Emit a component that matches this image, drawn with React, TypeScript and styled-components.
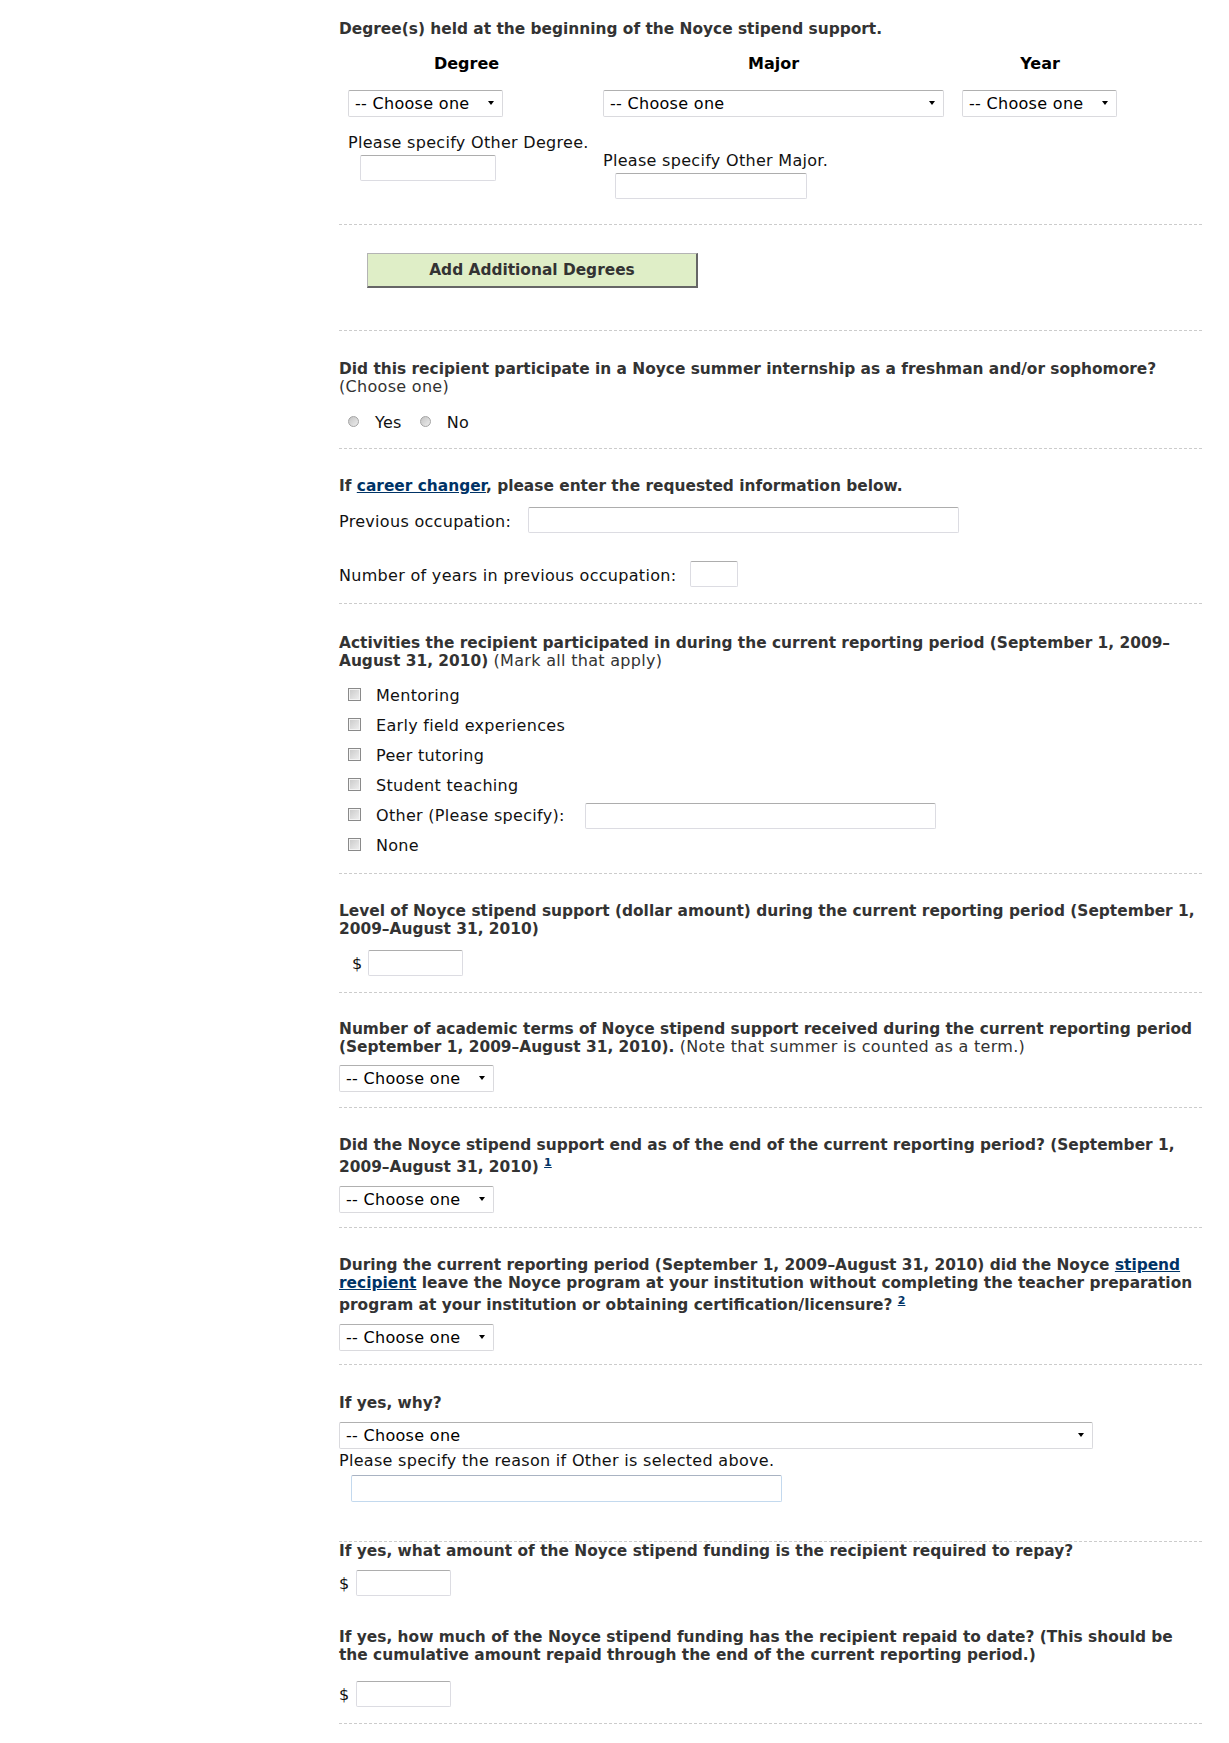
import React from 'react';
import styled, { createGlobalStyle } from 'styled-components';

const FONT = `"DejaVu Sans", Verdana, sans-serif`;

const GlobalStyle = createGlobalStyle`
  body {
    margin: 0;
    background: #fff;
    font-family: ${FONT};
    color: #000;
  }
`;

const ChooseSelect: React.FC<{ width: number }> = ({ width }) => (
  <SelectWrap $w={width}>
    <Select defaultValue="">
      <option value="">-- Choose one</option>
    </Select>
  </SelectWrap>
);

const App: React.FC = () => {
  return (
    <>
      <GlobalStyle />
      <Page>
        <Section $pt={20} $pb={25}>
          <Heading>Degree(s) held at the beginning of the Noyce stipend support.</Heading>
          <DegreeGrid>
            <ColHead>Degree</ColHead>
            <ColHead>Major</ColHead>
            <ColHead>Year</ColHead>
            <ColBody>
              <ChooseSelect width={155} />
              <Label $mt={17}>Please specify Other Degree.</Label>
              <TextInput $w={136} $mt={3} $ml={12} />
            </ColBody>
            <ColBody>
              <ChooseSelect width={341} />
              <Label $mt={35}>Please specify Other Major.</Label>
              <TextInput $w={192} $mt={3} $ml={12} />
            </ColBody>
            <ColBody>
              <ChooseSelect width={155} />
            </ColBody>
          </DegreeGrid>
        </Section>

        <Section $pt={28} $pb={42}>
          <AddButton type="button">Add Additional Degrees</AddButton>
        </Section>

        <Section $pt={29} $pb={16}>
          <Heading>
            Did this recipient participate in a Noyce summer internship as a freshman and/or sophomore?
            <br />
            <Note>(Choose one)</Note>
          </Heading>
          <RadioGroup>
            <RadioOption>
              <Radio name="intern" />
              Yes
            </RadioOption>
            <RadioOption>
              <Radio name="intern" />
              No
            </RadioOption>
          </RadioGroup>
        </Section>

        <Section $pt={28} $pb={16}>
          <Heading>
            If <Link href="#">career changer</Link>, please enter the requested information below.
          </Heading>
          <FieldRow $mt={12}>
            <Label $pt={3}>Previous occupation:</Label>
            <TextInput $w={431} $ml={17} />
          </FieldRow>
          <FieldRow $mt={28}>
            <Label $pt={3}>Number of years in previous occupation:</Label>
            <TextInput $w={48} $ml={14} />
          </FieldRow>
        </Section>

        <Section $pt={30} $pb={12}>
          <Heading>
            Activities the recipient participated in during the current reporting period (September 1, 2009–August 31, 2010){' '}
            <Note>(Mark all that apply)</Note>
          </Heading>
          <CheckList>
            {['Mentoring', 'Early field experiences', 'Peer tutoring', 'Student teaching'].map((item) => (
              <CheckRow key={item}>
                <Checkbox />
                {item}
              </CheckRow>
            ))}
            <CheckRow>
              <Checkbox />
              Other (Please specify):
              <TextInput $w={351} $ml={20} />
            </CheckRow>
            <CheckRow>
              <Checkbox />
              None
            </CheckRow>
          </CheckList>
        </Section>

        <Section $pt={28} $pb={16}>
          <Heading>
            Level of Noyce stipend support (dollar amount) during the current reporting period (September 1, 2009–August 31, 2010)
          </Heading>
          <MoneyRow $mt={12} $indent={13}>
            <Dollar>$</Dollar>
            <TextInput $w={95} $ml={6} />
          </MoneyRow>
        </Section>

        <Section $pt={27} $pb={15}>
          <Heading>
            Number of academic terms of Noyce stipend support received during the current reporting period (September 1, 2009–August 31, 2010).{' '}
            <Note>(Note that summer is counted as a term.)</Note>
          </Heading>
          <SelectRow $mt={9}>
            <ChooseSelect width={155} />
          </SelectRow>
        </Section>

        <Section $pt={28} $pb={14}>
          <Heading>
            Did the Noyce stipend support end as of the end of the current reporting period? (September 1, 2009–August 31, 2010){' '}
            <Sup>
              <Link href="#">1</Link>
            </Sup>
          </Heading>
          <SelectRow $mt={10}>
            <ChooseSelect width={155} />
          </SelectRow>
        </Section>

        <Section $pt={28} $pb={13}>
          <Heading>
            During the current reporting period (September 1, 2009–August 31, 2010) did the Noyce{' '}
            <Link href="#">stipend recipient</Link> leave the Noyce program at your institution without completing the teacher
            preparation program at your institution or obtaining certification/licensure?{' '}
            <Sup>
              <Link href="#">2</Link>
            </Sup>
          </Heading>
          <SelectRow $mt={10}>
            <ChooseSelect width={155} />
          </SelectRow>
        </Section>

        <Section $pt={29} $pb={39}>
          <Heading>If yes, why?</Heading>
          <SelectRow $mt={10}>
            <ChooseSelect width={754} />
          </SelectRow>
          <Label $mt={3}>Please specify the reason if Other is selected above.</Label>
          <TextInput $w={431} $h={27} $mt={5} $ml={12} $focus />
        </Section>

        <Section $pt={0} $pb={16}>
          <Heading>If yes, what amount of the Noyce stipend funding is the recipient required to repay?</Heading>
          <MoneyRow $mt={10} $indent={0}>
            <Dollar>$</Dollar>
            <TextInput $w={95} $ml={7} />
          </MoneyRow>
          <Heading $mt={32}>
            If yes, how much of the Noyce stipend funding has the recipient repaid to date? (This should be the cumulative amount
            repaid through the end of the current reporting period.)
          </Heading>
          <MoneyRow $mt={17} $indent={0}>
            <Dollar>$</Dollar>
            <TextInput $w={95} $ml={7} />
          </MoneyRow>
        </Section>
      </Page>
    </>
  );
};

export default App;

const Page = styled.div`
  width: 863px;
  margin-left: 339px;
  padding-bottom: 40px;
`;

const Section = styled.section<{ $pt: number; $pb: number }>`
  padding: ${(p) => p.$pt}px 0 ${(p) => p.$pb}px;
  border-bottom: 1px dashed #cccccc;
`;

const Heading = styled.div<{ $mt?: number }>`
  margin-top: ${(p) => p.$mt ?? 0}px;
  font-size: 15.4px;
  line-height: 18px;
  font-weight: bold;
  color: #333;
`;

const Note = styled.span`
  font-size: 16px;
  font-weight: normal;
  letter-spacing: 0.3px;
  color: #333;
`;

const Link = styled.a`
  color: #003366;
  text-decoration: underline;
`;

const Sup = styled.sup`
  font-size: 11px;
`;

const DegreeGrid = styled.div`
  display: grid;
  grid-template-columns: 255px 359px 174px;
  margin-top: 17px;
`;

const ColHead = styled.div`
  text-align: center;
  font-size: 16px;
  line-height: 18px;
  font-weight: bold;
  color: #000;
`;

const ColBody = styled.div`
  padding: 17px 0 0 9px;
`;

const Label = styled.div<{ $mt?: number; $pt?: number }>`
  margin-top: ${(p) => p.$mt ?? 0}px;
  padding-top: ${(p) => p.$pt ?? 0}px;
  font-size: 16px;
  line-height: 18px;
  letter-spacing: 0.3px;
  color: #111;
  white-space: nowrap;
`;

const TextInput = styled.input<{ $w: number; $h?: number; $mt?: number; $ml?: number; $focus?: boolean }>`
  display: block;
  box-sizing: border-box;
  flex: none;
  width: ${(p) => p.$w}px;
  height: ${(p) => p.$h ?? 26}px;
  margin: ${(p) => p.$mt ?? 0}px 0 0 ${(p) => p.$ml ?? 0}px;
  padding: 0 4px;
  border: 1px solid ${(p) => (p.$focus ? '#c3d9ee' : '#dcdce2')};
  border-top-color: ${(p) => (p.$focus ? '#a9b3c2' : '#adadad')};
  border-radius: 2px;
  background: #fff;
  font: 16px ${FONT};
  outline: none;
`;

const SelectWrap = styled.div<{ $w: number }>`
  position: relative;
  width: ${(p) => p.$w}px;
  height: 27px;

  &::after {
    content: '';
    position: absolute;
    right: 9px;
    top: 11px;
    border-left: 3.5px solid transparent;
    border-right: 3.5px solid transparent;
    border-top: 4px solid #000;
    pointer-events: none;
  }
`;

const Select = styled.select`
  appearance: none;
  box-sizing: border-box;
  width: 100%;
  height: 100%;
  margin: 0;
  padding: 0 24px 0 6px;
  border: 1px solid #dadade;
  border-top-color: #b0b0b0;
  border-radius: 2px;
  background: #fff;
  font: 16px ${FONT};
  letter-spacing: 0.3px;
  color: #000;
  outline: none;
`;

const SelectRow = styled.div<{ $mt: number }>`
  margin-top: ${(p) => p.$mt}px;
`;

const AddButton = styled.button`
  box-sizing: border-box;
  display: block;
  width: 331px;
  height: 35px;
  margin-left: 28px;
  padding: 0;
  background: #dfeec7;
  border: 1px solid #b4b4b4;
  border-right: 2px solid #666;
  border-bottom: 2px solid #666;
  font: bold 15.4px ${FONT};
  color: #333;
  cursor: pointer;
`;

const RadioGroup = styled.div`
  display: flex;
  gap: 18px;
  margin-top: 18px;
  padding-left: 9px;
`;

const RadioOption = styled.label`
  display: flex;
  align-items: center;
  gap: 16px;
  font-size: 16px;
  line-height: 18px;
  letter-spacing: 0.3px;
  color: #111;
`;

const Radio = styled.input.attrs({ type: 'radio' })`
  appearance: none;
  width: 11px;
  height: 11px;
  margin: 0 0 4px;
  border-radius: 50%;
  border: 1px solid #a4a4a4;
  background: linear-gradient(135deg, #c4c4c4, #ededed);
`;

const FieldRow = styled.div<{ $mt: number }>`
  display: flex;
  align-items: center;
  margin-top: ${(p) => p.$mt}px;
`;

const CheckList = styled.div`
  margin-top: 11px;
`;

const CheckRow = styled.label`
  display: flex;
  align-items: center;
  height: 30px;
  padding-left: 9px;
  font-size: 16px;
  line-height: 18px;
  letter-spacing: 0.3px;
  color: #111;
`;

const Checkbox = styled.input.attrs({ type: 'checkbox' })`
  appearance: none;
  box-sizing: border-box;
  width: 13px;
  height: 13px;
  margin: 0 15px 4px 0;
  border: 1px solid #8a8a8a;
  box-shadow: inset 0 0 0 1px #f4f4f4;
  background: linear-gradient(135deg, #c8c8c8, #f0f0f0);
`;

const MoneyRow = styled.div<{ $mt: number; $indent: number }>`
  display: flex;
  align-items: center;
  margin-top: ${(p) => p.$mt}px;
  padding-left: ${(p) => p.$indent}px;
`;

const Dollar = styled.span`
  font-size: 16px;
  line-height: 18px;
  color: #111;
  padding-top: 2px;
`;
